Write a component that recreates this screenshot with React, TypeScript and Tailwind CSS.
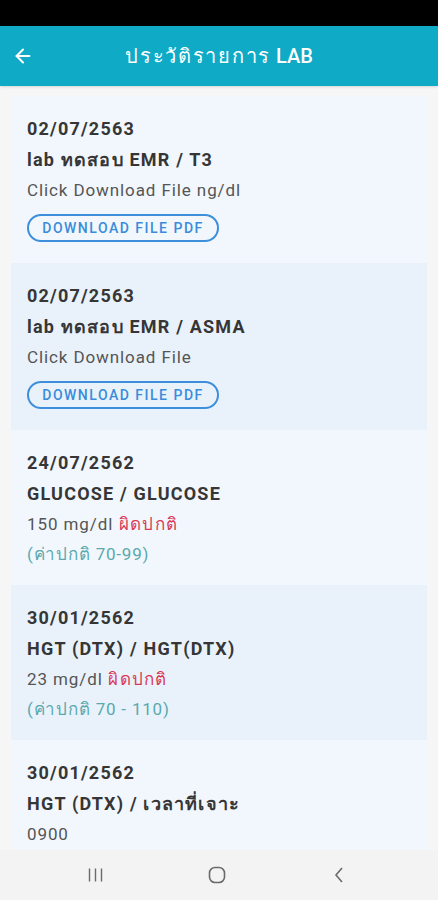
import { ArrowLeft } from "lucide-react";

type Lab = {
  date: string;
  title: string;
  value: string;
  abnormal?: boolean;
  range?: string;
  pdf?: boolean;
};

const labs: Lab[] = [
  { date: "02/07/2563", title: "lab ทดสอบ EMR / T3", value: "Click Download File ng/dl", pdf: true },
  { date: "02/07/2563", title: "lab ทดสอบ EMR / ASMA", value: "Click Download File", pdf: true },
  { date: "24/07/2562", title: "GLUCOSE / GLUCOSE", value: "150 mg/dl", abnormal: true, range: "(ค่าปกติ 70-99)" },
  { date: "30/01/2562", title: "HGT (DTX) / HGT(DTX)", value: "23 mg/dl", abnormal: true, range: "(ค่าปกติ 70 - 110)" },
  { date: "30/01/2562", title: "HGT (DTX) / เวลาที่เจาะ", value: "0900" },
];

const LabCard = ({ lab, shaded }: { lab: Lab; shaded: boolean }) => (
  <div className={`${shaded ? "bg-[#e9f2fb]" : "bg-[#f2f7fd]"} px-[16px] pt-[17px] ${lab.pdf ? "pb-[21px]" : "pb-[16px]"}`}>
    <div className="text-[18px] leading-[31px] font-bold tracking-[1.2px] text-[#363636]">{lab.date}</div>
    <div className="text-[18px] leading-[31px] font-bold tracking-[1.2px] text-[#363636]">{lab.title}</div>
    <div className="text-[17px] leading-[30px] tracking-[0.9px] text-[#555555]">
      {lab.value}
      {lab.abnormal && <span className="tracking-[1.3px] text-[#d93a55]"> ผิดปกติ</span>}
    </div>
    {lab.range && <div className="text-[17px] leading-[30px] tracking-[0.8px] text-[#5aa9ae]">{lab.range}</div>}
    {lab.pdf && (
      <button className="mt-[9px] h-[28px] w-[192px] rounded-full border-2 border-[#3d8fdc] text-[14px] font-medium tracking-[1.5px] text-[#3a8cda]">
        DOWNLOAD FILE PDF
      </button>
    )}
  </div>
);

export default function App() {
  return (
    <div className="w-[438px] h-[900px] flex flex-col bg-[#f6f6f6] overflow-hidden font-['Roboto','Noto_Sans',sans-serif]">
      <div className="h-[26px] bg-black shrink-0" />
      <div className="h-[60px] shrink-0 bg-[#0eaac6] flex items-center relative shadow-sm">
        <ArrowLeft className="absolute left-[12px] w-[22px] h-[22px] text-white" strokeWidth={2.2} />
        <div className="flex-1 text-center text-white text-[20px] font-medium">
          <span className="tracking-[1.7px]">ประวัติรายการ</span> LAB
        </div>
      </div>
      <div className="flex-1 overflow-hidden px-[11px] pt-[10px]">
        {labs.map((lab, i) => (
          <LabCard key={i} lab={lab} shaded={i % 2 === 1} />
        ))}
      </div>
      <div className="h-[50px] shrink-0 bg-[#f3f3f3] flex items-center justify-center gap-[98px] pr-[4px] text-[#6a6a6a]">
        <div className="w-[24px] flex justify-center">
          <svg width="17" height="16" viewBox="0 0 17 16" fill="none" stroke="currentColor" strokeWidth="1.4">
            <path d="M2.5 1.5v13M8.5 1.5v13M14.5 1.5v13" />
          </svg>
        </div>
        <div className="w-[24px] flex justify-center">
          <svg width="18" height="18" viewBox="0 0 18 18" fill="none" stroke="currentColor" strokeWidth="1.6">
            <rect x="1.5" y="1.5" width="15" height="15" rx="5.5" />
          </svg>
        </div>
        <div className="w-[24px] flex justify-center">
          <svg width="12" height="18" viewBox="0 0 12 18" fill="none" stroke="currentColor" strokeWidth="1.6">
            <path d="M9 2L3 9l6 7" />
          </svg>
        </div>
      </div>
    </div>
  );
}
